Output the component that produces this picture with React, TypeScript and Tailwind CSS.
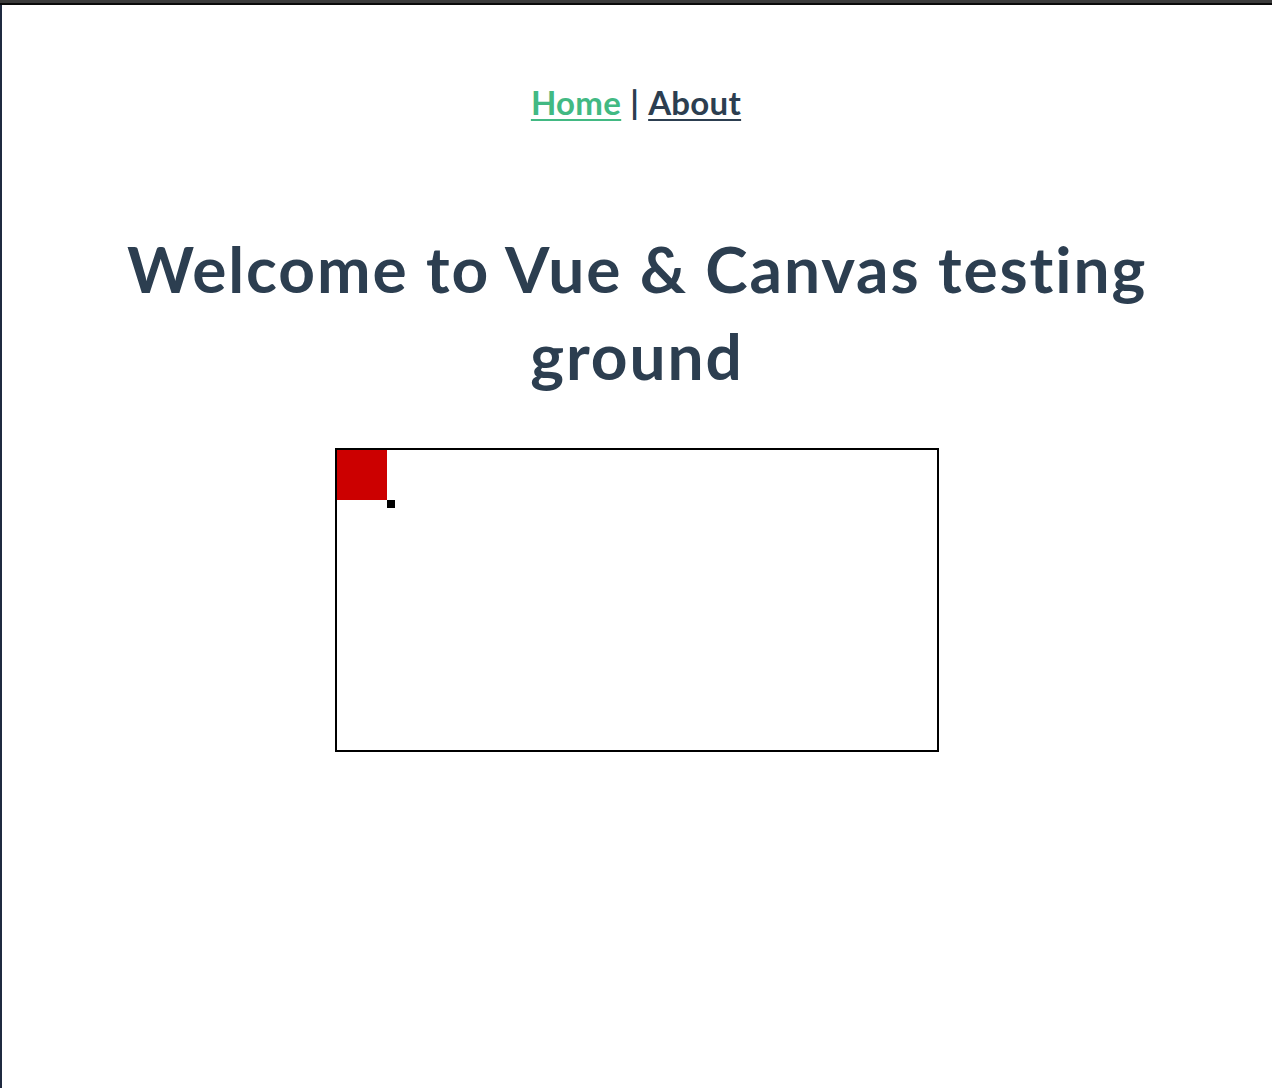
import React from "react";

export default function App() {
  return (
    <div className="w-[1272px] h-[1088px] bg-white flex flex-col overflow-hidden" style={{ fontFamily: "Lato, 'Noto Sans', sans-serif" }}>
      <div className="h-[3px] bg-[#3b3b3b] shrink-0" />
      <div className="h-[2px] bg-[#0a0a0a] shrink-0" />
      <div className="flex flex-1">
        <div className="w-[2px] bg-[#1f2a40] shrink-0" />
        <div className="flex-1 flex flex-col items-center text-[#2c3e50]">
          <nav className="pt-[77px] text-[33px] font-bold leading-[40px] tracking-[0.3px] pr-[2px]">
            <a href="#" className="text-[#42b983] underline decoration-[2px] underline-offset-[4px]">Home</a>
            <span className="mx-[9px]">|</span>
            <a href="#" className="text-[#2c3e50] underline decoration-[2px] underline-offset-[4px]">About</a>
          </nav>
          <h1 className="mt-[103px] w-[1140px] text-center text-[64px] font-bold leading-[87px] tracking-[1.9px]">
            Welcome to Vue &amp; Canvas testing ground
          </h1>
          <div className="mt-[49px] w-[604px] h-[304px] border-2 border-black relative">
            <div className="absolute left-0 top-0 w-[50px] h-[50px] bg-[#cc0000]" />
            <div className="absolute left-[50px] top-[50px] w-[8px] h-[8px] bg-black" />
          </div>
        </div>
      </div>
    </div>
  );
}
